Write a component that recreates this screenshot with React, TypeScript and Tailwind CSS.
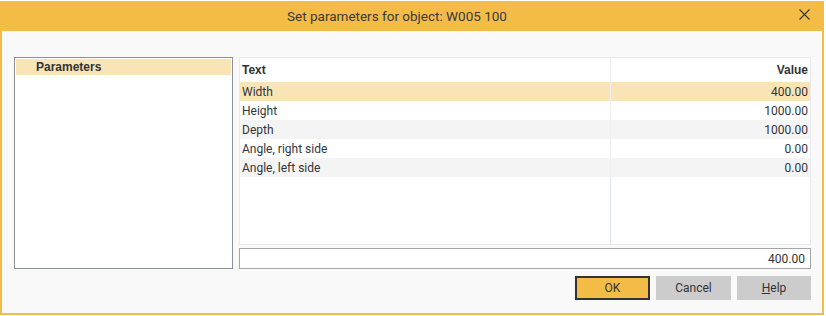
import React from "react";

const rows = [
  { text: "Width", value: "400.00", bg: "bg-[#f9e4b6]" },
  { text: "Height", value: "1000.00", bg: "bg-white" },
  { text: "Depth", value: "1000.00", bg: "bg-[#f4f4f4]" },
  { text: "Angle, right side", value: "0.00", bg: "bg-white" },
  { text: "Angle, left side", value: "0.00", bg: "bg-[#f4f4f4]" },
];

const App = () => {
  return (
    <div className="w-[826px] h-[316px] bg-white pt-[1px] font-['Roboto',sans-serif] text-[#32363a]">
      <div className="w-[824px] h-[314px] flex flex-col bg-[#f3bc47] px-[2px] pb-[2px]">
        {/* TITLE BAR */}
        <div className="relative h-[30px] flex items-center justify-center pr-[30px]">
          <span className="text-[13.5px] text-[#3a3a3a]">Set parameters for object: W005 100</span>
          <svg className="absolute right-[12px] top-[8px]" width="11" height="11" viewBox="0 0 11 11">
            <path d="M0.5 0.5 L10.5 10.5 M10.5 0.5 L0.5 10.5" stroke="#333" strokeWidth="1.1" />
          </svg>
        </div>

        {/* BODY */}
        <div className="flex-1 bg-[#f9f9f9] pt-[26px] pl-[12px] pr-[11px] flex gap-[6px]">
          {/* LEFT TREE */}
          <div className="w-[219px] h-[212px] border border-[#8c9099] bg-white p-[1px]">
            <div className="h-[16px] bg-[#f9e4b6] flex items-center pl-[20px] font-['Liberation_Sans',sans-serif] font-bold text-[12px] text-[#333]">
              Parameters
            </div>
          </div>

          {/* RIGHT SIDE */}
          <div className="flex-1 flex flex-col">
            <div className="h-[188px] border border-[#e8eaed] bg-white flex flex-col">
              <div className="h-[24px] flex shrink-0 font-['Liberation_Sans',sans-serif] font-bold text-[12px] text-[#333]">
                <div className="w-[371px] border-r border-[#eceef1] flex items-center pl-[2px]">Text</div>
                <div className="flex-1 flex items-center justify-end pr-[2px]">Value</div>
              </div>
              {rows.map((r) => (
                <div key={r.text} className={`h-[19px] flex shrink-0 text-[12px] ${r.bg}`}>
                  <div className="w-[371px] border-r border-[#eceef1] flex items-center pl-[2px]">{r.text}</div>
                  <div className="flex-1 flex items-center justify-end pr-[2px]">{r.value}</div>
                </div>
              ))}
              <div className="flex-1 flex">
                <div className="w-[371px] border-r border-[#dde6f5]" />
              </div>
            </div>

            <div className="mt-[3px] h-[21px] border border-[#a5a5a5] bg-white flex items-center justify-end pr-[5px] text-[12px]">
              400.00
            </div>

            <div className="mt-[7px] flex justify-end gap-[6px] text-[12px] text-[#333]">
              <button className="w-[75px] h-[24px] bg-[#f3bc47] border-2 border-[#333]">OK</button>
              <button className="w-[75px] h-[24px] bg-[#cccccc]">Cancel</button>
              <button className="w-[74px] h-[24px] bg-[#cccccc]">
                <span className="underline">H</span>elp
              </button>
            </div>
          </div>
        </div>
      </div>
    </div>
  );
};

export default App;
